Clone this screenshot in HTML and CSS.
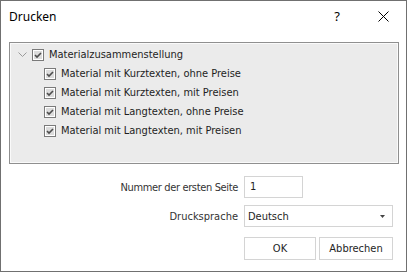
FILE: index.html
```html
<!DOCTYPE html>
<html lang="de">
<head>
    <meta charset="UTF-8">
    <title>Drucken</title>
    <link rel="stylesheet" href="styles.css">
</head>
<body>
    <div class="dialog">
        <!-- Title bar -->
        <div class="title-bar">
            <span class="title">Drucken</span>
            <span class="title-btn help">?</span>
            <span class="title-btn close">
                <svg width="11" height="11" viewBox="0 0 11 11"><path d="M0.5 0.5 L10.5 10.5 M10.5 0.5 L0.5 10.5" stroke="#000" stroke-width="1" fill="none"/></svg>
            </span>
        </div>

        <!-- Report tree -->
        <div class="tree-panel">
            <div class="tree-row root">
                <svg class="chevron" width="9" height="6" viewBox="0 0 9 6"><path d="M0.5 0.5 L4.5 4.5 L8.5 0.5" stroke="#9a9a9a" stroke-width="1" fill="none"/></svg>
                <span class="check"><svg width="12" height="12" viewBox="0 0 12 12"><rect x="0.5" y="0.5" width="11" height="11" fill="#fff" stroke="#7a7a7a"/><rect x="2" y="2" width="8" height="8" fill="#dcdcdc"/><path d="M3 6 L5 8 L9 4" stroke="#4d4d4d" stroke-width="1.6" fill="none"/></svg></span>
                <span class="tree-text">Materialzusammenstellung</span>
            </div>
            <div class="tree-row child">
                <span class="check"><svg width="12" height="12" viewBox="0 0 12 12"><rect x="0.5" y="0.5" width="11" height="11" fill="#fff" stroke="#7a7a7a"/><rect x="2" y="2" width="8" height="8" fill="#dcdcdc"/><path d="M3 6 L5 8 L9 4" stroke="#4d4d4d" stroke-width="1.6" fill="none"/></svg></span>
                <span class="tree-text">Material mit Kurztexten, ohne Preise</span>
            </div>
            <div class="tree-row child">
                <span class="check"><svg width="12" height="12" viewBox="0 0 12 12"><rect x="0.5" y="0.5" width="11" height="11" fill="#fff" stroke="#7a7a7a"/><rect x="2" y="2" width="8" height="8" fill="#dcdcdc"/><path d="M3 6 L5 8 L9 4" stroke="#4d4d4d" stroke-width="1.6" fill="none"/></svg></span>
                <span class="tree-text">Material mit Kurztexten, mit Preisen</span>
            </div>
            <div class="tree-row child">
                <span class="check"><svg width="12" height="12" viewBox="0 0 12 12"><rect x="0.5" y="0.5" width="11" height="11" fill="#fff" stroke="#7a7a7a"/><rect x="2" y="2" width="8" height="8" fill="#dcdcdc"/><path d="M3 6 L5 8 L9 4" stroke="#4d4d4d" stroke-width="1.6" fill="none"/></svg></span>
                <span class="tree-text">Material mit Langtexten, ohne Preise</span>
            </div>
            <div class="tree-row child">
                <span class="check"><svg width="12" height="12" viewBox="0 0 12 12"><rect x="0.5" y="0.5" width="11" height="11" fill="#fff" stroke="#7a7a7a"/><rect x="2" y="2" width="8" height="8" fill="#dcdcdc"/><path d="M3 6 L5 8 L9 4" stroke="#4d4d4d" stroke-width="1.6" fill="none"/></svg></span>
                <span class="tree-text">Material mit Langtexten, mit Preisen</span>
            </div>
        </div>

        <!-- Options -->
        <div class="form">
            <div class="form-row first">
                <span class="form-label tight">Nummer der ersten Seite</span>
                <div class="field page-input">1</div>
            </div>
            <div class="form-row lang">
                <span class="form-label">Drucksprache</span>
                <div class="field lang-select">
                    <span>Deutsch</span>
                    <svg width="5" height="3" viewBox="0 0 5 3"><path d="M0 0 L5 0 L2.5 3 Z" fill="#444"/></svg>
                </div>
            </div>
            <div class="form-row buttons">
                <span class="form-label"></span>
                <button class="btn ok-btn">OK</button>
                <button class="btn cancel-btn">Abbrechen</button>
            </div>
        </div>
    </div>
</body>
</html>
```

FILE: styles.css
```css
* {
    margin: 0;
    padding: 0;
    box-sizing: border-box;
}

body {
    width: 407px;
    height: 272px;
    background: #fff;
    overflow: hidden;
}

.dialog {
    width: 407px;
    height: 272px;
    border: 1px solid #707070;
    background: #fff;
    font-family: "DejaVu Sans Condensed", "DejaVu Sans", sans-serif;
    font-stretch: condensed;
    font-size: 11px;
}

/* Title bar */
.title-bar {
    display: flex;
    align-items: center;
    height: 30px;
    padding-left: 8px;
}

.title {
    flex-grow: 1;
    font-family: "Noto Sans", sans-serif;
    font-stretch: normal;
    font-size: 12px;
    color: #000;
}

.title-btn {
    width: 46px;
    height: 30px;
    display: flex;
    justify-content: center;
    align-items: center;
    color: #000;
}

.help {
    font-family: "Noto Sans", sans-serif;
    font-stretch: normal;
    font-size: 13px;
}

/* Tree panel */
.tree-panel {
    margin: 11px 7px 0 8px;
    height: 122px;
    padding-top: 2px;
    background: #ebebeb;
    border: 1px solid #8f8f8f;
    box-shadow: inset 0 0 0 1px #fafafa;
}

.tree-row {
    display: flex;
    align-items: center;
    height: 19px;
    color: #1e1e1e;
}

.tree-row.root {
    padding-left: 8px;
}

.tree-row.child {
    padding-left: 34px;
}

.chevron {
    margin-right: 5px;
}

.check {
    display: flex;
    width: 12px;
    height: 12px;
    margin-right: 5px;
}

/* Form */
.form {
    margin-top: 12px;
    display: flex;
    flex-direction: column;
}

.form-row {
    display: flex;
    align-items: center;
    gap: 6px;
}

.form-label {
    width: 237px;
    text-align: right;
    color: #333;
}

.form-label.tight {
    letter-spacing: -0.35px;
}

.field {
    height: 22px;
    border: 1px solid #d4d4d4;
    background: #fff;
    color: #1e1e1e;
}

.page-input {
    width: 59px;
    padding: 3px 0 0 5px;
}

.form-row.lang {
    margin-top: 7px;
}

.lang-select {
    width: 149px;
    display: flex;
    align-items: center;
    justify-content: space-between;
    padding: 0 7px 0 3px;
}

.form-row.buttons {
    margin-top: 10px;
}

.btn {
    height: 23px;
    border: 1px solid #d4d4d4;
    background: #fff;
    color: #1e1e1e;
    font-family: inherit;
    font-stretch: condensed;
    font-size: 11px;
}

.ok-btn {
    width: 72px;
}

.cancel-btn {
    width: 74px;
    margin-left: -3px;
}
```
